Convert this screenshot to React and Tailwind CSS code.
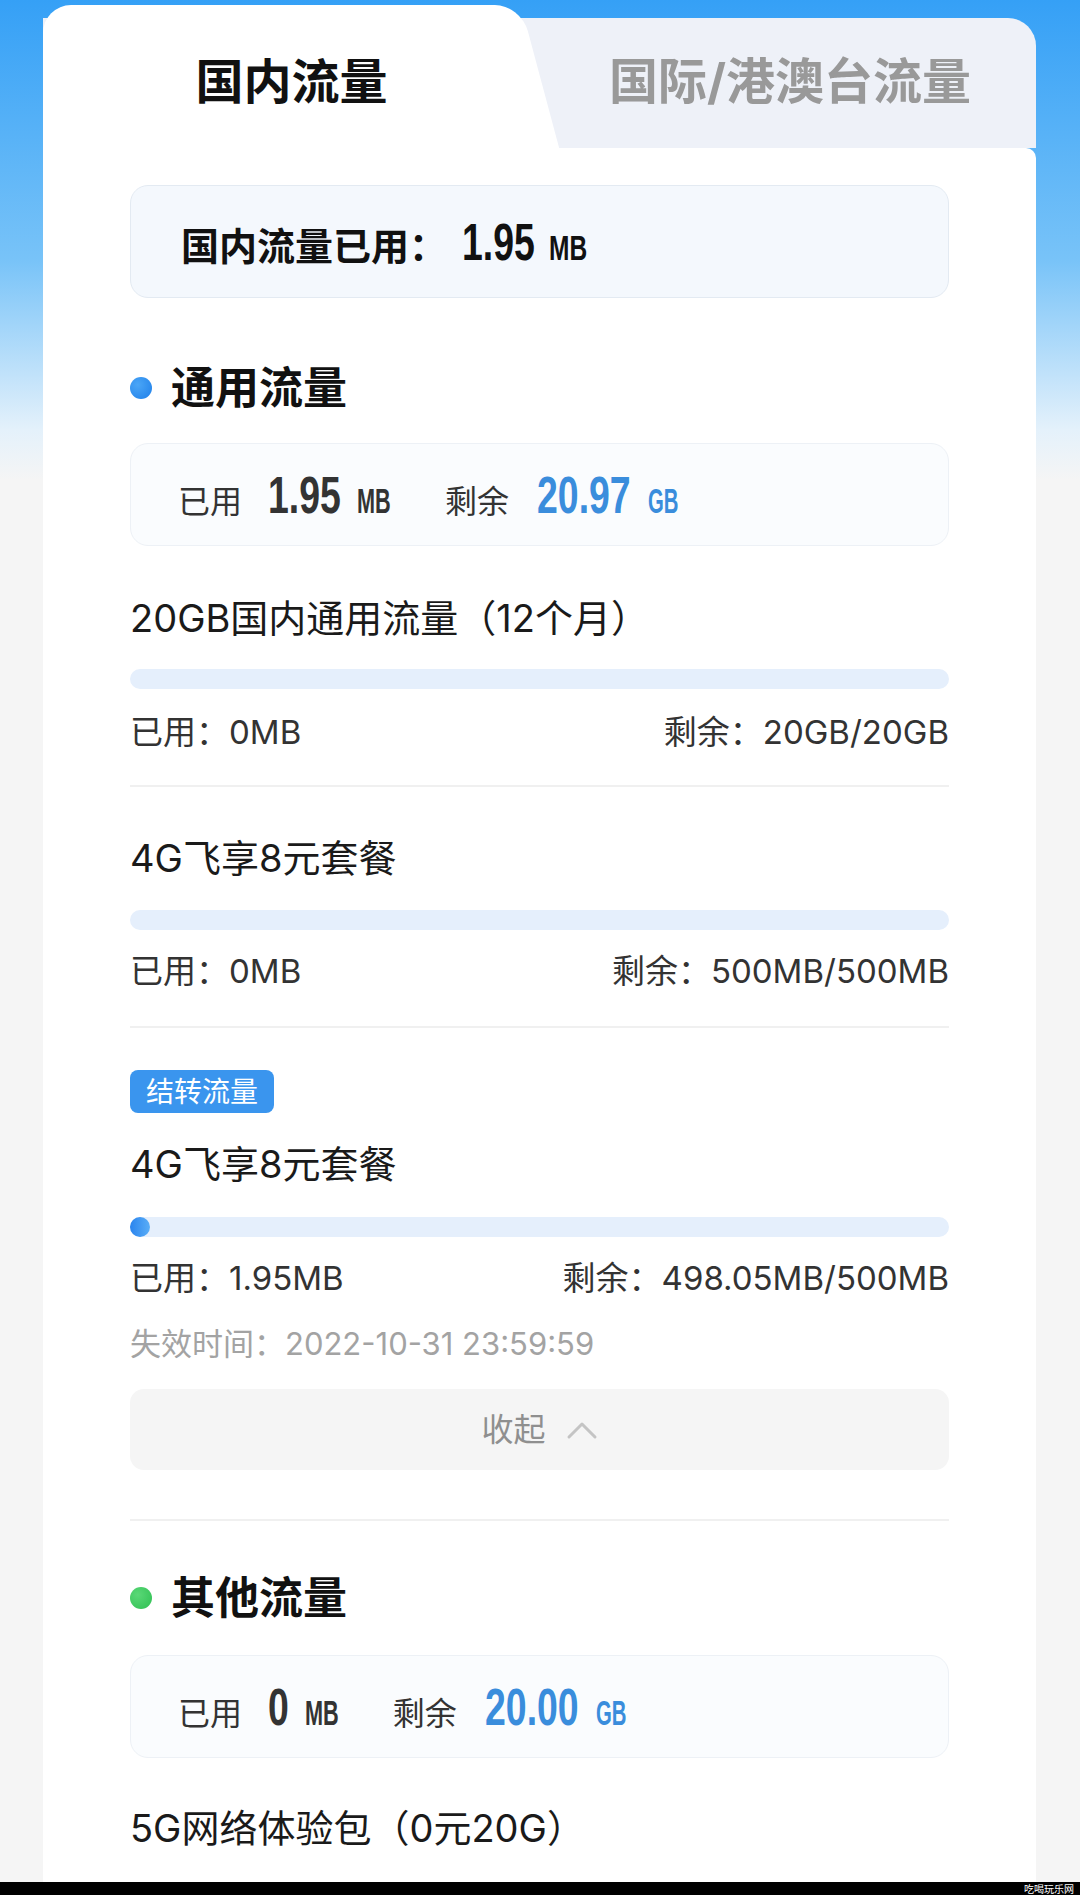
import { useLayoutEffect, useRef, useState } from 'react'

// condensed digits: scale horizontally, then give back the space the scale freed
function Cond({ children, className = '' }) {
  const ref = useRef(null)
  const [mr, setMr] = useState(0)
  useLayoutEffect(() => {
    if (!ref.current) return
    const s = parseFloat(getComputedStyle(ref.current).scale.split(' ')[0]) || 1
    setMr(-ref.current.offsetWidth * (1 - s))
  }, [children])
  return (
    <span
      ref={ref}
      className={`inline-block origin-left font-['Liberation_Sans',sans-serif] font-bold leading-none ${className}`}
      style={{ marginRight: mr }}
    >
      {children}
    </span>
  )
}

function Heading({ dot, children, className = '' }) {
  return (
    <div className={`flex items-center gap-[19px] h-[44px] ${className}`}>
      <span className={`w-[22px] h-[22px] rounded-full ${dot}`} />
      <span className="text-[44px] leading-none font-bold text-[#111]">{children}</span>
    </div>
  )
}

function StatsBox({ used, left, className = '' }) {
  return (
    <div className={`h-[103px] rounded-[18px] bg-[#fafcfe] border border-[#edf1f6] flex items-center pl-[47px] ${className}`}>
      <div className="flex items-baseline">
        <span className="text-[32px] leading-none text-[#333]">已用</span>
        <Cond className="ml-[26px] text-[52px] text-[#333] scale-x-[0.72]">{used}</Cond>
        <Cond className="ml-[16px] text-[35px] text-[#333] scale-x-[0.62]">MB</Cond>
        <span className="ml-[54px] text-[32px] leading-none text-[#333]">剩余</span>
        <Cond className="ml-[28px] text-[52px] text-[#3a8ddc] scale-x-[0.72]">{left}</Cond>
        <Cond className="ml-[17px] text-[35px] text-[#3a8ddc] scale-x-[0.58]">GB</Cond>
      </div>
    </div>
  )
}

function UsageRow({ used, left, className = '' }) {
  return (
    <div className={`flex justify-between items-center h-[33px] text-[33px] leading-none text-[#333] ${className}`}>
      <span>已用：{used}</span>
      <span>剩余：{left}</span>
    </div>
  )
}

function Bar({ fill, className = '' }) {
  return (
    <div className={`h-[20px] rounded-full bg-[#e5effc] ${className}`}>
      {fill && <div className="h-[20px] w-[20px] rounded-full bg-[linear-gradient(90deg,#2a84ee,#5aaef7)]" />}
    </div>
  )
}

export default function App() {
  return (
    <div className="h-[1895px] flex flex-col bg-[linear-gradient(180deg,#35a0f6_0px,#78c3f8_260px,#e4f1fb_430px,#f5f5f5_480px,#f5f5f5_100%)] font-['Inter','Noto_Sans_CJK_SC',sans-serif] overflow-hidden">
      <div className="flex-1 flex flex-col ml-[43px] mr-[44px] pt-[5px] min-h-0">
        {/* tabs */}
        <div className="relative h-[143px] shrink-0">
          <div className="absolute left-0 right-0 top-[13px] bottom-0 bg-[#eef1f8] rounded-tr-[28px]" />
          <div className="absolute left-[397px] top-0 bottom-0 w-[100px] bg-white rounded-tr-[26px] skew-x-[15deg]" />
          <div className="absolute left-0 top-0 bottom-0 w-[440px] bg-white rounded-tl-[28px]" />
          <div className="relative grid grid-cols-[497px_1fr] h-full">
            <div className="flex items-center justify-center pt-[10px] text-[48px] font-bold leading-none text-[#111]">国内流量</div>
            <div className="flex items-center justify-center pt-[10px] pl-[4px] text-[49px] font-bold leading-none text-[#999]">国际/港澳台流量</div>
          </div>
        </div>

        {/* body */}
        <div className="flex-1 bg-white rounded-tr-[10px] px-[87px] overflow-hidden">
          <div className="mt-[37px] h-[113px] rounded-[18px] bg-[#f4f8fd] border border-[#e3eaf2] flex items-center pl-[50px]">
            <div className="flex items-baseline text-[#111]">
              <span className="text-[38px] leading-none font-bold">国内流量已用：</span>
              <Cond className="ml-[15px] text-[52px] scale-x-[0.72]">1.95</Cond>
              <Cond className="ml-[14px] text-[35px] scale-x-[0.7]">MB</Cond>
            </div>
          </div>

          <Heading dot="bg-[radial-gradient(circle_at_35%_35%,#4aa6f7,#1f7fe9)]" className="mt-[68px]">通用流量</Heading>
          <StatsBox used="1.95" left="20.97" className="mt-[33px]" />

          <div className="pb-[36px] border-b-2 border-[#f0f0f0]">
            <div className="mt-[53px] h-[38px] text-[38px] leading-none text-[#1a1a1a]">20GB国内通用流量（12个月）</div>
            <Bar className="mt-[32px]" />
            <UsageRow used="0MB" left="20GB/20GB" className="mt-[27px]" />
          </div>

          <div className="pb-[38px] border-b-2 border-[#f0f0f0]">
            <div className="mt-[52px] h-[38px] text-[38px] leading-none text-[#1a1a1a]">4G飞享8元套餐</div>
            <Bar className="mt-[33px]" />
            <UsageRow used="0MB" left="500MB/500MB" className="mt-[25px]" />
          </div>

          <div className="pb-[49px] border-b-2 border-[#f0f0f0]">
            <div className="mt-[42px] inline-flex items-center h-[43px] px-[16px] rounded-[8px] bg-[#3a95ee] text-[28px] leading-none text-white">结转流量</div>
            <div className="mt-[32px] h-[38px] text-[38px] leading-none text-[#1a1a1a]">4G飞享8元套餐</div>
            <Bar fill className="mt-[34px]" />
            <UsageRow used="1.95MB" left="498.05MB/500MB" className="mt-[25px]" />
            <div className="mt-[33px] h-[31px] text-[31px] leading-none text-[#a3a3a3]">失效时间：2022-10-31 23:59:59</div>
            <div className="mt-[30px] h-[81px] rounded-[14px] bg-[#f5f5f5] flex items-center justify-center gap-[20px]">
              <span className="text-[32px] leading-none text-[#8f8f8f]">收起</span>
              <svg width="32" height="20" viewBox="0 0 32 20" fill="none">
                <path d="M3 17 L16 4 L29 17" stroke="#c4c4c4" strokeWidth="3" strokeLinecap="round" strokeLinejoin="round" />
              </svg>
            </div>
          </div>

          <Heading dot="bg-[radial-gradient(circle_at_35%_35%,#5ad877,#2fbf52)]" className="mt-[55px]">其他流量</Heading>
          <StatsBox used="0" left="20.00" className="mt-[35px]" />

          <div className="mt-[51px] h-[38px] text-[38px] leading-none text-[#1a1a1a]">5G网络体验包（0元20G）</div>
        </div>
      </div>

      {/* watermark strip */}
      <div className="h-[13px] shrink-0 bg-black flex items-center justify-end pr-[6px]">
        <span className="text-[10px] leading-none text-white">吃喝玩乐网</span>
      </div>
    </div>
  )
}
